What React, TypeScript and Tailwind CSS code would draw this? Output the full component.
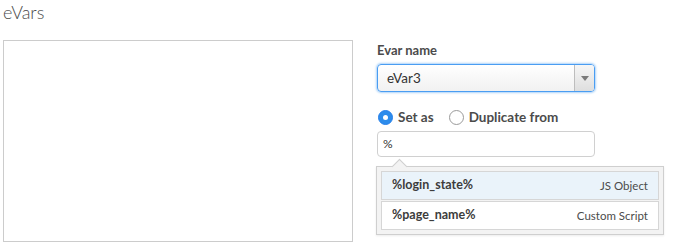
import { useState } from 'react';

const options = [
    { name: '%login_state%', type: 'JS Object' },
    { name: '%page_name%', type: 'Custom Script' },
];

const Radio = ({ checked, label }: { checked: boolean; label: string }) => (
    <label className="flex items-center gap-[5px] cursor-pointer">
        {checked ? (
            <span className="w-[15px] h-[15px] rounded-full bg-[#2d8ceb] border border-[#2680eb] flex items-center justify-center">
                <span className="w-[5px] h-[5px] rounded-full bg-white"></span>
            </span>
        ) : (
            <span className="w-[15px] h-[15px] rounded-full bg-white border-[1.5px] border-[#9a9a9a]"></span>
        )}
        <span className="text-[13.5px] font-bold text-[#4b4b4b]">{label}</span>
    </label>
);

const App = () => {
    const [mode, setMode] = useState('set');

    return (
        <div className="w-[674px] h-[250px] bg-white font-['Lato',sans-serif] text-[#4b4b4b] px-[3px] overflow-hidden">
            <h2 className="text-[18px] font-light leading-[24px] text-[#4b4b4b]">eVars</h2>

            <div className="flex gap-[24px] mt-[16px]">
                {/* Empty list panel */}
                <div className="w-[350px] h-[202px] border border-[#cccccc] bg-white"></div>

                {/* Form */}
                <div className="flex flex-col pt-[1px]">
                    <span className="text-[13px] font-bold leading-[18px] text-[#4b4b4b]">Evar name</span>

                    <div className="mt-[5px] w-[218px] h-[28px] flex rounded-[4px] border border-[#4a9df2] shadow-[0_0_2px_1px_rgba(74,157,242,0.45)] bg-gradient-to-b from-white to-[#f1f1f1] overflow-hidden">
                        <span className="flex-1 px-[9px] text-[13.5px] leading-[26px] text-[#333333]">eVar3</span>
                        <span className="w-[20px] border-l border-[#bdbdbd] bg-gradient-to-b from-[#f6f6f6] to-[#dedede] flex items-center justify-center">
                            <span className="w-0 h-0 border-l-[4px] border-r-[4px] border-t-[5px] border-l-transparent border-r-transparent border-t-[#7a7a7a]"></span>
                        </span>
                    </div>

                    <div className="flex items-center gap-[15px] mt-[15px] pl-[1px]" onClick={() => setMode(mode)}>
                        <Radio checked={mode === 'set'} label="Set as" />
                        <Radio checked={mode === 'dup'} label="Duplicate from" />
                    </div>

                    <div className="mt-[4px] w-[218px] h-[26px] rounded-[4px] border border-[#d0d0d0] bg-white px-[5px] text-[12px] leading-[24px] text-[#333333]">
                        %
                    </div>

                    {/* Autocomplete popover */}
                    <div className="relative mt-[9px] -ml-[1px] w-[288px] border border-[#cfcfcf] bg-[#f3f3f3] p-[4px] shadow-[0_1px_2px_rgba(0,0,0,0.08)]">
                        <span className="absolute -top-[6px] left-[17px] w-[11px] h-[11px] rotate-45 bg-[#f3f3f3] border-l border-t border-[#cfcfcf]"></span>
                        <div className="relative flex flex-col gap-[1px]">
                            {options.map((o, i) => (
                                <div
                                    key={o.name}
                                    className={`h-[29px] flex items-center justify-between px-[10px] border border-[#d6d6d6] ${i === 0 ? 'bg-[#eaf3fa]' : 'bg-white'}`}
                                >
                                    <span className="text-[12.5px] font-bold text-[#3c3c3c]">{o.name}</span>
                                    <span className="text-[11.5px] text-[#4b4b4b]">{o.type}</span>
                                </div>
                            ))}
                        </div>
                    </div>
                </div>
            </div>
        </div>
    );
};

export default App;
